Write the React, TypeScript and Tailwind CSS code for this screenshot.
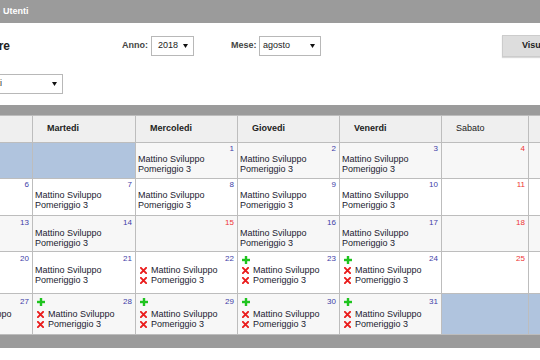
import React from 'react';

type Cell = {
  day: number;
  empty?: boolean;
  red?: boolean;
  shifts?: boolean;
  plus?: boolean;
  cross?: boolean;
};

const days = ['Lunedi', 'Martedi', 'Mercoledi', 'Giovedi', 'Venerdi', 'Sabato', 'Domenica'];

const s = (day: number): Cell => ({ day, shifts: true });
const r = (day: number): Cell => ({ day, red: true });
const x = (day: number, plus = true): Cell => ({ day, shifts: true, cross: true, plus });
const e = (day: number): Cell => ({ day, empty: true });

const weeks: Cell[][] = [
  [e(30), e(31), s(1), s(2), s(3), r(4), r(5)],
  [s(6), s(7), s(8), s(9), s(10), r(11), r(12)],
  [s(13), s(14), r(15), s(16), s(17), r(18), r(19)],
  [s(20), s(21), x(22, false), x(23), x(24), r(25), r(26)],
  [x(27), x(28), x(29), x(30), x(31), e(1), e(2)],
];

// per-row vertical offsets, measured on the screenshot
const rowCfg = [
  { pt: 'pt-[1px]', top: 'h-[10px]', plusMt: 'mt-[2px]', bg: 'bg-[#f7f7f7]' },
  { pt: 'pt-[1px]', top: 'h-[10px]', plusMt: 'mt-[2px]', bg: 'bg-white' },
  { pt: 'pt-[2px]', top: 'h-[10px]', plusMt: 'mt-[2px]', bg: 'bg-[#f7f7f7]' },
  { pt: 'pt-[2px]', top: 'h-[11px]', plusMt: 'mt-[2px]', bg: 'bg-white' },
  { pt: 'pt-[3px]', top: 'h-[12px]', plusMt: 'mt-[1px]', bg: 'bg-[#f7f7f7]' },
];

function Plus({ className }: { className: string }) {
  return (
    <svg viewBox="0 0 8 8" className={`w-[8px] h-[8px] ${className}`}>
      <rect x="2.8" y="0" width="2.4" height="8" fill="#1fc41f" />
      <rect x="0" y="2.8" width="8" height="2.4" fill="#1fc41f" />
    </svg>
  );
}

function Cross() {
  return (
    <svg viewBox="0 0 8 8" className="w-[7px] h-[7px] shrink-0">
      <path d="M1 1 L7 7 M7 1 L1 7" stroke="#ea1c1c" strokeWidth="2.2" strokeLinecap="square" />
    </svg>
  );
}

function Arrow() {
  return (
    <svg viewBox="0 0 5 4" className="w-[5px] h-[4px]">
      <path d="M0 0 L5 0 L2.5 4 Z" fill="#111" />
    </svg>
  );
}

function DayCell({ cell, row }: { cell: Cell; row: number }) {
  const cfg = rowCfg[row];
  if (cell.empty) return <div className="bg-[#b0c4de]" />;
  const lines = ['Mattino Sviluppo', 'Pomeriggio 3'];
  return (
    <div className={`${cfg.bg} ${cfg.pt} flex flex-col overflow-hidden`}>
      <div className={`${cfg.top} flex items-start pl-[4px] pr-[3px]`}>
        {cell.plus && <Plus className={cfg.plusMt} />}
        <span
          className={`ml-auto text-[8px] leading-[9px] ${cell.red ? 'text-[#ee3535]' : 'text-[#3e3ea8]'}`}
        >
          {cell.day}
        </span>
      </div>
      {cell.shifts &&
        lines.map((l) =>
          cell.cross ? (
            <div key={l} className="flex items-center gap-[4px] pl-[4px] h-[10px] text-[9px] leading-[10px] text-[#222230] whitespace-nowrap">
              <Cross />
              <span>{l}</span>
            </div>
          ) : (
            <div key={l} className="pl-[2px] h-[10px] text-[9px] leading-[10px] text-[#222230] whitespace-nowrap">
              {l}
            </div>
          )
        )}
    </div>
  );
}

export default function App() {
  return (
    <div className="w-[540px] h-[360px] overflow-hidden bg-white font-['Liberation_Sans',Arial,sans-serif]">
      <div className="-ml-[71px] w-[720px]">
        <div className="h-[23px] bg-[#9b9b9b] flex items-center text-white text-[9px] font-bold">
          <span className="w-[74px] text-right pr-[3px]">Calendario</span>
          <span>Utenti</span>
        </div>

        <div className="mt-[12px] h-[22px] flex items-center">
          <span className="w-[81px] text-right text-[12px] font-bold text-[#222]">Operatore</span>
          <span className="ml-[112px] w-[29px] text-[9px] font-bold text-[#444]">Anno:</span>
          <div className="w-[43px] h-[20px] border border-[#b8b8b8] bg-white flex items-center justify-between pl-[6px] pr-[5px] text-[9px] text-[#222]">
            <span>2018</span>
            <Arrow />
          </div>
          <span className="ml-[37px] w-[28px] text-[9px] font-bold text-[#444]">Mese:</span>
          <div className="w-[62px] h-[20px] border border-[#b8b8b8] bg-white flex items-center justify-between pl-[3px] pr-[5px] text-[9px] text-[#222]">
            <span>agosto</span>
            <Arrow />
          </div>
          <button className="ml-[181px] h-[22px] px-[19px] bg-[#dddddd] border border-[#cccccc] shadow-[0_1px_1px_rgba(0,0,0,0.15)] text-[9px] font-bold text-[#222]">
            Visualizza
          </button>
        </div>

        <div className="mt-[17px] ml-[10px] w-[124px] h-[20px] border border-[#b8b8b8] bg-white flex items-center justify-between pr-[5px] text-[9px] text-[#333]">
          <span className="ml-[3px] w-[59px] text-right overflow-hidden whitespace-nowrap">Tutti gli utenti</span>
          <Arrow />
        </div>

        <div className="mt-[11px] h-[10px] bg-[#9b9b9b]" />

        <div className="grid grid-cols-[102px_102px_101px_101px_101px_86px_100px] grid-rows-[26px_35px_36px_35px_41px_40px] gap-px p-px bg-[#bdbdbd] w-max">
          {days.map((d, i) => (
            <div
              key={d}
              className={`bg-[#efefef] flex items-center pl-[14px] text-[9px] text-[#222] ${i === 5 ? 'font-normal' : 'font-bold'}`}
            >
              {d}
            </div>
          ))}
          {weeks.map((w, ri) => w.map((c, ci) => <DayCell key={`${ri}-${ci}`} cell={c} row={ri} />))}
        </div>

        <div className="h-[13px] bg-[#9b9b9b]" />
      </div>
    </div>
  );
}
